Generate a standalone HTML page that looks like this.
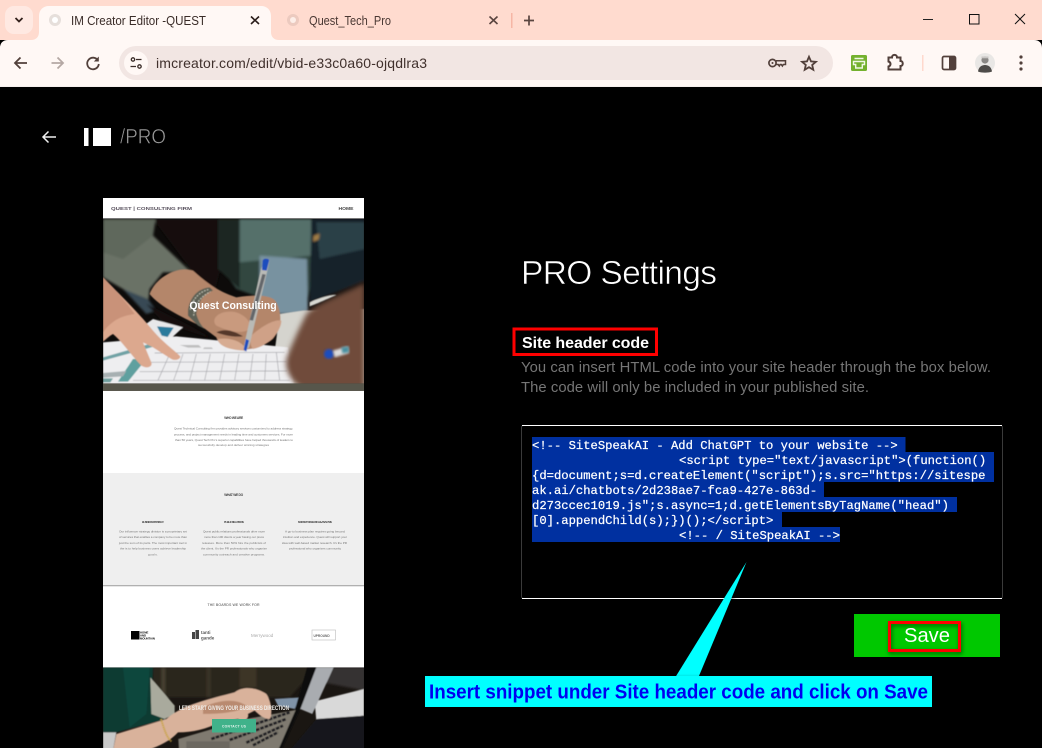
<!DOCTYPE html>
<html><head><meta charset="utf-8"><title>IM Creator Editor -QUEST</title>
<style>
html,body{margin:0;padding:0;background:#000;width:1042px;height:748px;overflow:hidden}
svg{display:block;position:absolute;left:0;top:0}
text{font-family:"Liberation Sans",sans-serif;white-space:pre}
.m{font-family:"Liberation Mono",monospace;font-size:12.2px;fill:#fff;stroke:#fff;stroke-width:.22px}
.t{font-size:3.1px;fill:#777}
.h{font-size:3.3px;fill:#444;font-weight:bold;text-anchor:middle}
.ic{fill:none;stroke:#52403b;stroke-width:1.8}
</style></head><body>
<svg width="1042" height="748" viewBox="0 0 1042 748" xmlns="http://www.w3.org/2000/svg">
<defs>
<filter id="b0" x="-3%" y="-3%" width="106%" height="106%"><feGaussianBlur stdDeviation="1.6"/></filter>
<filter id="b1" x="-5%" y="-5%" width="110%" height="110%"><feGaussianBlur stdDeviation="3"/></filter>
<filter id="b2" x="-20%" y="-20%" width="140%" height="140%"><feGaussianBlur stdDeviation="8"/></filter>
<filter id="b3" x="-10%" y="-10%" width="120%" height="120%"><feGaussianBlur stdDeviation="0.38"/></filter>
<filter id="sh" x="-10%" y="-20%" width="120%" height="150%"><feDropShadow dx="1" dy="2" stdDeviation="2" flood-color="#000" flood-opacity=".55"/></filter>
<clipPath id="hc"><rect x="0" y="0" width="783" height="493"/></clipPath>
<clipPath id="lc"><rect x="0" y="10" width="783" height="242"/></clipPath>
</defs>
<rect width="1042" height="748" fill="#000"/>

<!-- browser chrome -->
<rect width="1042" height="40" fill="#ffdbcf"/>
<rect x="5" y="6" width="28" height="28" rx="9" fill="#ffe9e2"/>
<path d="M15.500 18l3.500 3.500 3.500-3.500" fill="none" stroke="#33211c" stroke-width="1.800"/>
<path d="M31 40c5 0 8-3 8-8V16c0-6 4-10 10-10h212c6 0 10 4 10 10v16c0 5 3 8 8 8z" fill="#fff8f5"/>
<circle cx="55" cy="20" r="6" fill="#e6dfdb"/><circle cx="55" cy="20" r="3" fill="#fff"/>
<text x="71" y="25" font-size="12.500" fill="#3a2c28" textLength="135" lengthAdjust="spacingAndGlyphs">IM Creator Editor -QUEST</text>
<path d="M251 16.500l8 7.500m0-7.500l-8 7.500" stroke="#2a1d1a" stroke-width="1.600" fill="none"/>
<circle cx="293" cy="20" r="6" fill="#eccabf"/><circle cx="293" cy="20" r="3" fill="#fdeee8"/>
<text x="309" y="25" font-size="12.500" fill="#4a3833" textLength="82" lengthAdjust="spacingAndGlyphs">Quest_Tech_Pro</text>
<path d="M489.500 16.500l8 7.500m0-7.500l-8 7.500" stroke="#5a4540" stroke-width="1.600" fill="none"/>
<rect x="511" y="13" width="1.500" height="15" fill="#f6b6a5"/>
<path d="M524 20.500h10M529 15.500v10" stroke="#5a4540" stroke-width="1.700" fill="none"/>
<path d="M923 19.500h10" stroke="#222" stroke-width="1"/>
<rect x="969.500" y="14.500" width="9.500" height="9.500" fill="none" stroke="#111" stroke-width="1"/>
<path d="M1015 14l10 10m0-10l-10 10" stroke="#111" stroke-width="1" fill="none"/>

<path d="M0 87V48c0-5 3-8 8-8h1026c5 0 8 3 8 8v39z" fill="#fff8f5"/>
<path d="M13 40h1020v8H0c0-5 5-8 13-8z" fill="#fff8f5"/>
<rect x="119" y="46" width="714" height="34" rx="17" fill="#f2e6e3"/>
<path d="M27 63H15.500m5-5.500l-5.500 5.500 5.500 5.500" class="ic"/>
<path d="M63 63H51.500m6-5.500l5.500 5.500-5.500 5.500" fill="none" stroke="#b5a8a4" stroke-width="1.800"/>
<path d="M98 60.500a5.800 5.800 0 1 0 .8 3.500" class="ic"/><path d="M98.800 56.500v5h-5z" fill="#52403b"/>
<circle cx="136" cy="63" r="12" fill="#fff8f5"/>
<circle cx="133" cy="59.500" r="1.700" fill="none" stroke="#3a2c28" stroke-width="1.300"/>
<path d="M136 59.500h5.500M130.500 66.500h5.500" stroke="#3a2c28" stroke-width="1.300"/>
<circle cx="139.500" cy="66.500" r="1.700" fill="none" stroke="#3a2c28" stroke-width="1.300"/>
<text x="156" y="68" font-size="14" fill="#40302c" textLength="271">imcreator.com/edit/vbid-e33c0a60-ojqdlra3</text>
<!-- key -->
<circle cx="772.500" cy="63" r="3.600" fill="none" stroke="#52403b" stroke-width="1.700"/>
<circle cx="772.500" cy="63" r="1" fill="#52403b"/>
<path d="M776 60.800h9.500v3.700h-2.200l-.9 1.500-1.100-1.500h-1.100l-.9 1.500-1.100-1.500H776" fill="none" stroke="#52403b" stroke-width="1.500"/>
<!-- star -->
<path d="M809 56.800l2 4.600 4.900.4-3.700 3.200 1.100 4.800-4.300-2.600-4.300 2.600 1.100-4.800-3.700-3.200 4.900-.4z" fill="none" stroke="#52403b" stroke-width="1.800"/>
<!-- green ext -->
<rect x="851" y="55" width="16" height="16" rx="1.500" fill="#74b12e"/>
<path d="M854.500 58.500h9" stroke="#f0f8e4" stroke-width="1.500"/>
<path d="M853.500 61.500h11v3h-2.200v3.500h-6.600v-3.500h-2.200z" fill="none" stroke="#f0f8e4" stroke-width="1.400"/>
<!-- puzzle -->
<path d="M888.500 57.500h3.500c0-3.500 5-3.500 5 0h3.500v3.500c3 0 3 5 0 5v3.500h-12v-3c1.500-.5 2-1.500 2-2.500s-.5-2-2-2.500z" fill="none" stroke="#52403b" stroke-width="2"/>
<rect x="922" y="55" width="1.500" height="16" fill="#ffd9cd"/>
<rect x="942.500" y="56.500" width="13" height="13" rx="1.500" fill="none" stroke="#52403b" stroke-width="1.700"/><rect x="949" y="56.500" width="6.500" height="13" fill="#52403b"/>
<circle cx="985" cy="63" r="10" fill="#e9e7e5"/>
<circle cx="985" cy="60" r="3.600" fill="#8a8785"/><path d="M978 71.500c.8-5 4-6.500 7-6.500s6.200 1.500 7 6.500c-3 1.500-11 1.500-14 0z" fill="#4e4b49"/><rect x="981.500" y="56.500" width="7" height="1.800" fill="#c9c6c4"/>
<circle cx="1021" cy="57" r="1.600" fill="#52403b"/><circle cx="1021" cy="63" r="1.600" fill="#52403b"/><circle cx="1021" cy="69" r="1.600" fill="#52403b"/>
<rect y="86" width="1042" height="1" fill="#f5efed"/>

<!-- top-left logo -->
<path d="M56 137H43m5.500-5.500L43 137l5.500 5.500" fill="none" stroke="#f0f0f0" stroke-width="1.500"/>
<rect x="84" y="128" width="4.500" height="18" fill="#fff"/>
<rect x="93" y="128" width="18" height="18" fill="#fff"/>
<text x="120" y="143.500" font-size="21.500" fill="#9a9a9a" stroke="#000" stroke-width=".55" textLength="46" lengthAdjust="spacingAndGlyphs">/PRO</text>

<!-- thumbnail -->
<rect x="103" y="198" width="261" height="550" fill="#fff"/>
<g filter="url(#b3)">
<text x="111" y="210" font-size="4.800" font-weight="bold" fill="#57505c" textLength="81" lengthAdjust="spacingAndGlyphs">QUEST | CONSULTING FIRM</text>
<text x="338.500" y="210" font-size="4.200" font-weight="bold" fill="#444" textLength="15" lengthAdjust="spacingAndGlyphs">HOME</text>
</g>
<rect x="103" y="218" width="261" height="1.200" fill="#777"/>

<g transform="translate(103,219) scale(.3333)">
<rect width="783" height="516" fill="#57564b"/>
<g clip-path="url(#hc)">
<rect width="783" height="493" fill="#0d0b0a"/>
<g filter="url(#b0)">
<g filter="url(#b1)">
<path d="M150 0H350V160L330 240 270 160z" fill="#120c0a"/>
<path d="M345 0H625V190L605 285 530 285 470 235 400 210 350 140z" fill="#324641"/>
<path d="M410 0H625V110L410 130z" fill="#54706b"/>
<path d="M470 110L612 120 615 282 530 285 470 235z" fill="#7892a0"/>
<path d="M345 0H410V210L345 150z" fill="#1a2623"/>
<path d="M625 0H786V185L620 250z" fill="#18232a"/>
<path d="M640 10H786V90L650 120z" fill="#2c3f46"/>
<path d="M632 50l18-6-3 18-17 6z" fill="#a07d45"/>
<path d="M0 0H158L150 50 265 160 180 160 140 210 135 255 60 210 0 175z" fill="#6a7266"/>
<path d="M0 0H158L150 50 60 120 0 100z" fill="#5f675c"/>
<path d="M60 210L130 285 160 275 135 240z" fill="#384a55"/>
<path d="M130 255L260 320 330 360 180 310z" fill="#120f0d"/>
</g>
<!-- table -->
<path d="M530 285L600 275 786 270V510H500z" fill="#d5d4ce"/>
<path d="M150 300L240 325 200 362 65 360z" fill="#e8e8ea"/>
<path d="M162 322L212 326 194 354 176 350z" fill="#2b7a9c"/>
<path d="M0 370L220 352 555 385 575 510H0z" fill="#eeeef0"/>
<path d="M0 415L150 372 170 378 0 425z" fill="#6fa2a5"/>
<path d="M90 420H130L75 488H45z" fill="#5fa09f"/>
<path d="M0 462L70 456 60 472 0 476z" fill="#a7b0b2"/>
<path d="M0 478H30L22 490H0z" fill="#6fa09f"/>
<g stroke="#a5a5aa" stroke-width="2" fill="none">
<path d="M155 402L545 400M130 430L550 428M110 458L552 456M90 484H560"/>
<path d="M200 405L165 484M240 405L212 484M280 405L260 484M322 405L305 484M365 405L350 484M408 405L395 484M450 405L440 484M490 405L485 484M520 400L530 484"/>
</g>
<path d="M230 378l25 8h40l-8-8zM300 390h30l-4-5h-22z" fill="#a9a9a9" opacity=".7"/>
<!-- left hand -->
<path d="M0 175C40 215 110 285 150 335 180 370 215 395 232 412 232 422 215 426 205 420L150 385 120 370 145 430C150 445 130 450 115 440 85 410 60 370 30 345 20 350 10 360 0 368z" fill="#dca88e"/>
<path d="M0 175C40 215 70 250 95 285 60 290 30 300 0 340z" fill="#c99279"/>
<!-- writing arm -->
<path d="M140 225C160 170 230 140 270 155 310 190 340 215 400 235 470 225 510 230 520 250 540 290 535 330 510 360 480 385 440 395 410 390 370 390 345 375 340 355L300 325C250 300 170 265 140 225z" fill="#b4866b"/>
<path d="M345 360C380 355 420 365 430 395 395 395 345 385 345 360z" fill="#d7ac92"/>
<path d="M400 280C430 290 445 310 440 330 420 345 380 340 340 320 320 300 350 270 400 280z" fill="#c99a7e"/>
<path d="M450 345C480 320 515 300 535 305 535 335 500 380 450 390 440 380 440 355 450 345z" fill="#cfa187"/>
<path d="M340 340C370 325 400 340 420 352 395 355 365 350 340 340z" fill="#54382c"/>
<!-- watch -->
<path d="M255 275C260 235 285 208 320 205L330 215C300 225 285 250 280 285 285 305 295 320 305 330L285 320 255 290z" fill="#5d6054"/>
<path d="M262 272C268 240 290 218 316 212M272 290C276 255 290 235 322 218" stroke="#c9c9bb" stroke-width="3" fill="none" stroke-dasharray="5 4"/>
<!-- pen -->
<path d="M488 118L500 122 494 152 438 385 424 398 422 385 474 150z" fill="#b9bab6"/>
<path d="M478 165L488 167 450 305 440 303z" fill="#63666a"/>
<path d="M479 125c2-8 16-8 20-2l-8 32-14-2z" fill="#1f4dbd"/>
<path d="M422 392L429 360 438 364 430 398z" fill="#1f4dbd"/>
<!-- right blurred hand -->
<path d="M786 190C720 225 640 250 610 285 585 335 565 380 550 420 545 455 565 490 600 510H786z" fill="#6f4c3b" filter="url(#b2)"/>
<path d="M620 250C650 235 690 225 700 228 660 245 640 255 620 262z" fill="#d8d8d2"/>
<circle cx="678" cy="405" r="15" fill="#1f4dbd" filter="url(#b1)"/>
<path d="M690 395L735 382 738 402 695 415z" fill="#dcdcdc" filter="url(#b1)"/>
<path d="M715 385l22-3 1 18-20 3z" fill="#4a90a0" filter="url(#b1)"/>
</g>
</g>
<text x="390" y="270" text-anchor="middle" font-size="33" font-weight="bold" fill="#fff" textLength="262" lengthAdjust="spacingAndGlyphs">Quest Consulting</text>
</g>

<!-- about -->
<rect x="103" y="391" width="261" height="82" fill="#fff"/>
<rect x="103" y="473" width="261" height="112" fill="#efefef"/>
<rect x="103" y="585" width="261" height="1.300" fill="#b0b0b0"/>
<g filter="url(#b3)">
<text x="233.700" y="419" class="h" textLength="19">WHO WE ARE</text>
<text x="174" y="429.500" class="t" textLength="119">Quest Technical Consulting firm provides advisory services customized to address strategy,</text>
<text x="174" y="435.300" class="t" textLength="119">process, and project management needs in leading time and customers services. For more</text>
<text x="175" y="441" class="t" textLength="118">than 50 years, Quest Tech Pro's superior capabilities have helped thousands of leaders to</text>
<text x="198" y="446" class="t" textLength="71">successfully develop and deliver winning strategies</text>
<text x="233.700" y="496" class="h" textLength="19">WHAT WE DO</text>
<text x="153" y="523.200" class="h" style="font-size:2.800px" textLength="22">BUSINESS STRATEGY</text>
<text x="234" y="523.200" class="h" style="font-size:2.800px" textLength="20">PUBLIC RELATIONS</text>
<text x="315" y="523.200" class="h" style="font-size:2.800px" textLength="34">MARKET RESEARCH &amp; ANALYSIS</text>
<text x="119" y="532.300" class="t" textLength="68">Our influencer strategy division is a proprietary set</text>
<text x="119" y="538" class="t" textLength="68">of services that enables a company to be more than</text>
<text x="119" y="544" class="t" textLength="68">just the sum of its parts. The most important tool in</text>
<text x="120" y="549.500" class="t" textLength="66">the is to help business users achieve leadership</text>
<text x="148" y="555.400" class="t" textLength="10">goals.</text>
<text x="203" y="532.300" class="t" textLength="62">Quest public relations professionals drive more</text>
<text x="204" y="538" class="t" textLength="60">more than 100 clients a year having our press</text>
<text x="202" y="544" class="t" textLength="64">releases. More than 50% hire the publicists of</text>
<text x="201" y="549.500" class="t" textLength="66">the client. It's the PR professionals who organize</text>
<text x="203" y="555.400" class="t" textLength="62">community outreach and creative programs.</text>
<text x="285" y="532.300" class="t" textLength="60">A go-to business plan requires going beyond</text>
<text x="283" y="538" class="t" textLength="64">intuition and experience. Quest will support your</text>
<text x="282" y="544" class="t" textLength="65">idea with well-based market research. It's the PR</text>
<text x="289" y="549.500" class="t" textLength="52">professional who organizes community</text>
<text x="233.500" y="606" class="h" style="fill:#444;font-weight:normal;font-size:3.500px" textLength="52">THE BOARDS WE WORK FOR</text>
</g>
<!-- brands -->
<g filter="url(#b3)">
<rect x="131" y="631" width="8.500" height="8.500" fill="#000"/>
<text x="140" y="633.500" font-size="2.800" font-weight="bold" fill="#000">HOME</text><text x="140" y="636.500" font-size="2.800" font-weight="bold" fill="#000">AND</text><text x="140" y="639.500" font-size="2.800" font-weight="bold" fill="#000">MOUNTAIN</text>
<rect x="192" y="632" width="3" height="7" fill="#444"/><rect x="195.500" y="630" width="3.500" height="9" fill="#444"/>
<text x="201" y="634" font-size="4.500" font-weight="bold" fill="#555">tanti</text><text x="201" y="639.500" font-size="4.500" font-weight="bold" fill="#555">gande</text>
<text x="251" y="637" font-size="4.500" fill="#aaa">Merrywood</text>
<rect x="312" y="630" width="23.500" height="10" fill="none" stroke="#bbb" stroke-width=".6"/>
<text x="313.500" y="636.800" font-size="3.200" font-weight="bold" fill="#666">UPROUND</text>
</g>

<!-- laptop photo -->
<g transform="translate(103,664) scale(.3333)" clip-path="url(#lc)">
<rect y="10" width="786" height="242" fill="#1a1612"/>
<g filter="url(#b0)">
<g filter="url(#b1)">
<path d="M150 10H640L560 100H150z" fill="#2a251a"/>
<rect x="175" y="10" width="12" height="90" fill="#463f32"/>
<rect x="310" y="10" width="14" height="90" fill="#383226"/>
<rect x="410" y="10" width="50" height="60" fill="#3d3625"/>
<path d="M690 10H786V80L660 55z" fill="#353230"/>
</g>
<path d="M0 10H150L145 150 190 165 40 205H0z" fill="#083a33"/>
<path d="M60 10H140L130 150 80 190z" fill="#0c463e"/>
<path d="M142 40L215 125 215 150 185 165 145 150z" fill="#a9aa9d"/>
<path d="M635 112L783 75V155L640 170z" fill="#d9d9d9"/>
<path d="M640 165L786 155V260H560z" fill="#19191b"/>
<path d="M515 105L592 100 575 135 525 125z" fill="#7f93a8"/>
<path d="M640 10H692L628 150 592 135z" fill="#a9acb0"/>
<path d="M612 10H640L590 140 535 260H505L575 140z" fill="#0f0f10"/>
<path d="M226 225L430 165 578 138 525 260H228z" fill="#7f7a70"/>
<g stroke="#1f1f22" stroke-width="8" stroke-dasharray="11 3" fill="none">
<path d="M325 225L560 145M380 228L550 165M430 236L540 185M450 244L525 205"/>
</g>
<rect x="250" y="232" width="130" height="28" fill="#6c6860"/>
<path d="M190 165C240 120 320 105 395 85 420 65 460 70 490 90 505 110 510 150 500 165 485 165 470 155 455 140L435 150C440 165 420 175 405 165L350 175C310 195 270 205 225 205 200 232 170 245 130 260H30L40 210z" fill="#d9b29b"/>
<path d="M300 130C340 110 395 100 430 125 415 145 350 150 300 150z" fill="#b98a70"/>
<path d="M0 205H40L30 260H0z" fill="#c9c9c9"/>
<path d="M174 165C182 190 190 220 205 232" stroke="#c9a43f" stroke-width="6" fill="none" stroke-dasharray="4 2"/>
</g>
</g>
<rect x="212" y="719" width="44" height="13.500" fill="#40b28a"/>
<text x="234" y="727.500" font-size="3.300" font-weight="bold" fill="#e8f5ef" text-anchor="middle" textLength="24">CONTACT US</text>
<text x="234" y="710" font-size="6" font-weight="bold" fill="#f0eeea" text-anchor="middle" textLength="110" lengthAdjust="spacingAndGlyphs">LETS START GIVING YOUR BUSINESS DIRECTION</text>

<!-- settings -->
<text x="521" y="284" font-size="33.500" fill="#fff" stroke="#000" stroke-width=".6" textLength="196" lengthAdjust="spacing">PRO Settings</text>
<rect x="514" y="329" width="142.500" height="25.500" fill="none" stroke="#f00" stroke-width="3" filter="url(#sh)"/>
<text x="522" y="348" font-size="16" font-weight="bold" fill="#fff" textLength="127">Site header code</text>
<text x="521" y="372" font-size="14.800" fill="#767676" textLength="470">You can insert HTML code into your site header through the box below.</text>
<text x="521" y="392" font-size="14.800" fill="#767676" textLength="348">The code will only be included in your published site.</text>

<!-- textarea -->
<rect x="521.500" y="425.500" width="481" height="173" rx="2" fill="#000" stroke="#3a3a3a"/>
<path d="M522 425.500h480M522 598.500h480" stroke="#fff" stroke-width="1"/>
<g fill="#0030a0">
<rect x="532" y="437" width="373.500" height="15"/>
<rect x="532" y="452" width="462" height="30"/>
<rect x="532" y="482" width="292" height="15"/>
<rect x="532" y="497" width="425" height="15"/>
<rect x="532" y="512" width="250" height="15"/>
<rect x="532" y="527" width="308" height="15"/>
</g>
<text class="m" x="532" y="449">&lt;!-- SiteSpeakAI - Add ChatGPT to your website --&gt;</text>
<text class="m" x="679" y="464">&lt;script type="text/javascript"&gt;(function()</text>
<text class="m" x="532" y="479">{d=document;s=d.createElement("script");s.src="https://sitespe</text>
<text class="m" x="532" y="494">ak.ai/chatbots/2d238ae7-fca9-427e-863d-</text>
<text class="m" x="532" y="509">d273ccec1019.js";s.async=1;d.getElementsByTagName("head")</text>
<text class="m" x="532" y="524">[0].appendChild(s);})();&lt;/script&gt;</text>
<text class="m" x="679" y="539">&lt;!-- / SiteSpeakAI --&gt;</text>

<!-- save -->
<rect x="854" y="614" width="146" height="43" fill="#00c800"/>
<rect x="889.500" y="622.500" width="70" height="28" fill="none" stroke="#f00" stroke-width="3" filter="url(#sh)"/>
<text x="904" y="642" font-size="20.500" fill="#fff" textLength="46" lengthAdjust="spacingAndGlyphs">Save</text>

<!-- callout -->
<path d="M746.500 562L675.500 677H698.500z" fill="#0ff" filter="url(#sh)"/>
<rect x="425" y="676" width="507" height="31" fill="#0ff" filter="url(#sh)"/>
<text x="429" y="698.500" font-size="20.500" font-weight="bold" fill="#0000f0" textLength="499" lengthAdjust="spacingAndGlyphs">Insert snippet under Site header code and click on Save</text>
</svg>
</body></html>
